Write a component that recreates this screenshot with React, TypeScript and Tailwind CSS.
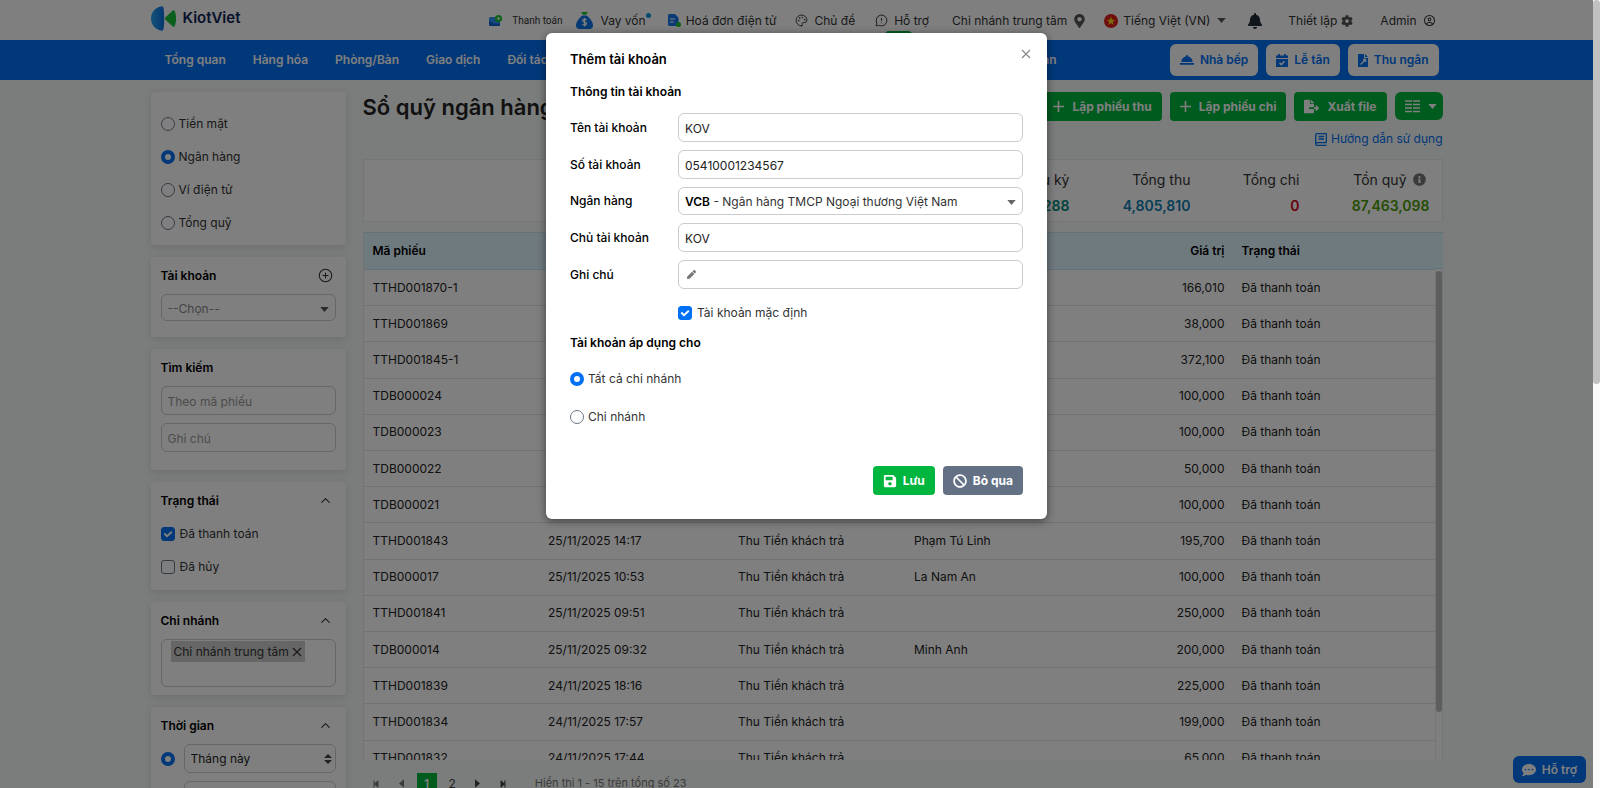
import { useState } from "react";
import type { ReactNode } from "react";
import {
  FaBan,
  FaBell,
  FaCog,
  FaCommentDots,
  FaFileExport,
  FaInfoCircle,
  FaMapMarkerAlt,
  FaPen,
  FaSave,
  FaStepBackward,
  FaStepForward,
} from "react-icons/fa";
import { FaRegCircleUser } from "react-icons/fa6";
import { ChevronUp, CirclePlus, MessageCircleWarning, Palette } from "lucide-react";

const payments = [
  { code: "TTHD001870-1", amount: "166,010" },
  { code: "TTHD001869", amount: "38,000" },
  { code: "TTHD001845-1", amount: "372,100" },
  { code: "TDB000024", amount: "100,000" },
  { code: "TDB000023", amount: "100,000" },
  { code: "TDB000022", amount: "50,000" },
  { code: "TDB000021", amount: "100,000" },
  { code: "TTHD001843", time: "25/11/2025 14:17", type: "Thu Tiền khách trả", payer: "Phạm Tú Linh", amount: "195,700" },
  { code: "TDB000017", time: "25/11/2025 10:53", type: "Thu Tiền khách trả", payer: "La Nam An", amount: "100,000" },
  { code: "TTHD001841", time: "25/11/2025 09:51", type: "Thu Tiền khách trả", amount: "250,000" },
  { code: "TDB000014", time: "25/11/2025 09:32", type: "Thu Tiền khách trả", payer: "Minh Anh", amount: "200,000" },
  { code: "TTHD001839", time: "24/11/2025 18:16", type: "Thu Tiền khách trả", amount: "225,000" },
  { code: "TTHD001834", time: "24/11/2025 17:57", type: "Thu Tiền khách trả", amount: "199,000" },
  { code: "TTHD001832", time: "24/11/2025 17:44", type: "Thu Tiền khách trả", amount: "65,000" },
];

const inputClass =
  "w-full h-[29px] rounded-md border border-[#ccc] bg-white px-1.5 pt-px text-xs text-[#222] placeholder:text-[#999] outline-none";

function Caret({ className = "" }: { className?: string }) {
  return (
    <svg viewBox="0 0 9 5" fill="currentColor" className={`h-[5px] w-[9px] ${className}`}>
      <path d="M0.300 0h8.400L4.500 5z" />
    </svg>
  );
}

function Cross({ className = "" }: { className?: string }) {
  return (
    <svg viewBox="0 0 10 10" fill="none" stroke="currentColor" strokeWidth="1.200" className={`size-[10px] ${className}`}>
      <path d="M1 1l8 8M9 1l-8 8" />
    </svg>
  );
}

function PlusSign() {
  return (
    <svg viewBox="0 0 11 11" stroke="currentColor" strokeWidth="1.600" className="size-[11px]">
      <path d="M5.500 0v11M0 5.500h11" />
    </svg>
  );
}

function Radio({ name, label, checked, onChange }: { name: string; label: ReactNode; checked: boolean; onChange: () => void }) {
  return (
    <label className="flex items-center gap-1">
      <input
        type="radio"
        name={name}
        checked={checked}
        onChange={onChange}
        className="size-[14px] shrink-0 appearance-none rounded-full border border-[#6b7688] bg-white checked:border-[4px] checked:border-[#0070f4]"
      />
      {label}
    </label>
  );
}

function Checkbox({ label, defaultChecked }: { label: string; defaultChecked?: boolean }) {
  return (
    <label className="flex items-center gap-[5px]">
      <span className="grid shrink-0">
        <input
          type="checkbox"
          defaultChecked={defaultChecked}
          className="peer [grid-area:1/1] size-[14px] appearance-none rounded-[3px] border border-[#6b7688] bg-white checked:border-[#0070f4] checked:bg-[#0070f4]"
        />
        <svg viewBox="0 0 14 14" className="pointer-events-none invisible [grid-area:1/1] size-[14px] peer-checked:visible">
          <path d="M3.200 6.500l2.800 2.700 4.800-4.500" fill="none" stroke="#fff" strokeWidth="1.900" />
        </svg>
      </span>
      {label}
    </label>
  );
}

function Card({ title, action, className = "", children }: { title: string; action?: ReactNode; className?: string; children: ReactNode }) {
  return (
    <section className={`rounded bg-white px-[10px] shadow-[0_2px_8px_rgba(0,0,0,0.12)] ${className}`}>
      <div className="flex h-[37px] items-center justify-between pr-[3px]">
        <h2 className="text-xs font-semibold text-black">{title}</h2>
        {action}
      </div>
      {children}
    </section>
  );
}

function Collapse() {
  return (
    <button aria-label="Thu gọn">
      <ChevronUp className="size-[15px]" strokeWidth={1.75} />
    </button>
  );
}

function Logo() {
  return (
    <a href="#" className="flex items-center gap-[7px]">
      <svg viewBox="0 0 25 25" className="size-[25px]">
        <defs>
          <linearGradient id="logo-blue" x1="0" x2="1">
            <stop offset="0" stopColor="#28a4f0" />
            <stop offset="1" stopColor="#0b6fe0" />
          </linearGradient>
        </defs>
        <path d="M10.500 0.200C3.500 1.500 0 7 0 12.500s3.500 11 10.500 12.300c1.200 0 1.800-.8 2-1.800 1-6.500 1-14.500 0-21-.2-1-.8-1.800-2-1.800z" fill="url(#logo-blue)" />
        <path d="M14.500 11.300l7-6.600c.9-.8 1.700-.6 2.200.4 1.900 4.600 1.900 10.200 0 14.800-.5 1-1.300 1.200-2.200.4l-7-6.600c-.7-.7-.7-1.700 0-2.400z" fill="#17c03c" />
      </svg>
      <span className="text-[15px] leading-6 font-semibold text-[#0d2257]">KiotViet</span>
    </a>
  );
}

function TopBar() {
  return (
    <header className="bg-white">
      <div className="mx-auto flex h-10 w-full max-w-[1292px] items-center justify-between pb-1 pr-2 whitespace-nowrap">
        <Logo />
        <div className="flex items-center pt-[5px]">
          <a href="#" className="flex items-center gap-[10px] font-['Roboto','Liberation_Sans',sans-serif] text-[10px]">
            <svg viewBox="0 0 13 11" className="h-[11px] w-[13px]">
              <rect y="2" width="11" height="9" rx="1.500" fill="#2a95f5" />
              <path d="M0 6l5 2.500h6v1a1.500 1.500 0 0 1-1.500 1.500h-8A1.500 1.500 0 0 1 0 9.500z" fill="#0b62d6" />
              <circle cx="9.500" cy="3.500" r="3.500" fill="#1cc531" />
              <circle cx="9.500" cy="3.500" r="1.200" fill="#fff" />
            </svg>
            Thanh toán
          </a>
          <a href="#" className="relative ml-[13px] flex items-center gap-2">
            <svg viewBox="0 0 17 17" className="size-[17px]">
              <path d="M5 0h7l-2 2.700H7z" fill="#1cc531" />
              <path d="M6.500 3.500h4C14 6 17 10 17 13.500c0 2-1.200 3.500-3.500 3.500h-10C1.200 17 0 15.500 0 13.500 0 10 3 6 6.500 3.500z" fill="#0b75e8" />
              <path d="M10.400 8.200C10 7.400 9.300 7.100 8.500 7.100c-1.100 0-1.900.5-1.900 1.500 0 2 3.900 1 3.900 3 0 1-.9 1.600-2 1.600-1 0-1.800-.4-2.100-1.300M8.500 5.900v8.500" fill="none" stroke="#fff" strokeWidth="1.200" />
            </svg>
            Vay vốn
            <span className="absolute top-0.5 -right-[5px] size-[5px] rounded-full bg-[#0a94e8]" />
          </a>
          <a href="#" className="ml-[22px] flex items-center gap-[5px]">
            <svg viewBox="0 0 13 13" className="size-[13px]">
              <path d="M1.500 0h5.500l3.500 3.500V12H1.500A1.500 1.500 0 0 1 0 10.500v-9A1.500 1.500 0 0 1 1.500 0z" fill="#1477ea" />
              <path d="M2 5h5M2 8h4" stroke="#fff" strokeWidth="1.200" />
              <circle cx="10.500" cy="10.500" r="2.500" fill="#1cc531" />
            </svg>
            Hoá đơn điện tử
          </a>
          <a href="#" className="ml-[19px] flex items-center gap-[6px]">
            <Palette className="size-[13px]" strokeWidth={1.75} />
            Chủ đề
          </a>
          <a href="#" className="relative ml-5 flex items-center gap-[6px]">
            <MessageCircleWarning className="size-[13px]" strokeWidth={1.75} />
            Hỗ trợ
            <span className="absolute top-5 left-[10px] rounded-sm bg-[#00b63e] px-1 text-[9px] leading-3 text-white">Beta</span>
          </a>
          <a href="#" className="ml-[23px] flex items-center gap-[7px]">
            Chi nhánh trung tâm
            <FaMapMarkerAlt className="h-[14px] w-[11px] text-[#555]" />
          </a>
          <button className="ml-[19px] flex items-center gap-[5px]">
            <svg viewBox="0 0 14 14" className="size-[14px]">
              <circle cx="7" cy="7" r="7" fill="#e01a1a" />
              <path d="M7 2.500l1.100 3.200h3.300L8.700 7.800l1 3.200L7 9.100 4.300 11l1-3.200L2.600 5.700h3.300z" fill="#ffdc1e" />
            </svg>
            Tiếng Việt (VN)
            <Caret className="ml-0.5 text-[#555]" />
          </button>
          <button aria-label="Thông báo" className="ml-[21px]">
            <FaBell className="size-4 text-[#222c38]" />
          </button>
          <a href="#" className="ml-[25px] flex items-center gap-1">
            Thiết lập
            <FaCog className="size-3 text-[#555]" />
          </a>
          <a href="#" className="ml-[27px] flex items-center gap-[7px]">
            Admin
            <FaRegCircleUser className="size-[11px]" />
          </a>
        </div>
      </div>
    </header>
  );
}

function NavBar() {
  return (
    <nav className="bg-[#0070f4] font-semibold text-white">
      <div className="mx-auto flex h-10 w-full max-w-[1292px] items-center justify-between pr-1 pl-[14px] whitespace-nowrap">
        <div className="flex w-[892px] items-center gap-[27px]">
          <a href="#">Tổng quan</a>
          <a href="#">Hàng hóa</a>
          <a href="#">Phòng/Bàn</a>
          <a href="#">Giao dịch</a>
          <a href="#">Đối tác</a>
          <a href="#" className="ml-auto">Thuế &amp; Kế toán</a>
        </div>
        <div className="flex gap-2 text-[#0070f4]">
          <button className="flex h-8 items-center gap-[6px] rounded-md bg-white px-[10px]">
            <svg viewBox="0 0 14 12" fill="currentColor" className="h-3 w-[14px]">
              <path d="M6.200 1h1.600v1.300C10.600 2.700 12.500 5 12.700 8H1.300C1.500 5 3.400 2.700 6.200 2.300zM0 9h14v1.800H0z" />
            </svg>
            Nhà bếp
          </button>
          <button className="flex h-8 items-center gap-[6px] rounded-md bg-white px-[10px]">
            <svg viewBox="0 0 12 13" className="h-[13px] w-3">
              <path d="M3 0v3M9 0v3" stroke="currentColor" strokeWidth="1.800" />
              <path d="M0 1.500h12V4H0zM0 5h12v8H0z" fill="currentColor" />
              <path d="M3.500 8.800l1.800 1.800 3.200-3.300" fill="none" stroke="#fff" strokeWidth="1.500" />
            </svg>
            Lễ tân
          </button>
          <button className="flex h-8 items-center gap-[6px] rounded-md bg-white px-[10px]">
            <svg viewBox="0 0 10 13" className="h-[13px] w-[10px]">
              <path d="M0 0h6v4h4v9H0zM7 0l3 3H7z" fill="currentColor" />
              <path d="M2.500 10.500l5-5M5 5.500h2.500V8" fill="none" stroke="#fff" strokeWidth="1.300" />
            </svg>
            Thu ngân
          </button>
        </div>
      </div>
    </nav>
  );
}

function Sidebar() {
  const [fund, setFund] = useState("Ngân hàng");
  return (
    <aside className="flex w-[195px] shrink-0 flex-col gap-3">
      <section className="flex h-[153px] flex-col gap-[13px] rounded bg-white px-[10px] pt-[22px] shadow-[0_2px_8px_rgba(0,0,0,0.12)]">
        {["Tiền mặt", "Ngân hàng", "Ví điện tử", "Tổng quỹ"].map((name) => (
          <Radio key={name} name="fund" label={name} checked={fund === name} onChange={() => setFund(name)} />
        ))}
      </section>
      <Card
        title="Tài khoản"
        className="pb-4"
        action={
          <button aria-label="Thêm tài khoản">
            <CirclePlus className="size-[15px]" strokeWidth={1.75} />
          </button>
        }
      >
        <div className="grid items-center">
          <select aria-label="Tài khoản" className="h-[27px] w-full appearance-none rounded-md border border-[#ccc] bg-white px-1.5 pt-0.5 text-xs text-[#888] [grid-area:1/1]">
            <option>--Chọn--</option>
          </select>
          <Caret className="pointer-events-none mt-1 mr-[7px] justify-self-end text-[#555] [grid-area:1/1]" />
        </div>
      </Card>
      <Card title="Tìm kiếm" className="pb-[18px]">
        <div className="flex flex-col gap-2">
          <input aria-label="Theo mã phiếu" placeholder="Theo mã phiếu" className={inputClass} />
          <input aria-label="Ghi chú" placeholder="Ghi chú" className={inputClass} />
        </div>
      </Card>
      <Card title="Trạng thái" className="pb-[13px]" action={<Collapse />}>
        <div className="flex flex-col gap-[13px] pt-[5px]">
          <Checkbox label="Đã thanh toán" defaultChecked />
          <Checkbox label="Đã hủy" />
        </div>
      </Card>
      <Card title="Chi nhánh" className="pb-2" action={<Collapse />}>
        <div className="h-12 rounded-md border border-[#ccc] px-[9px] pt-px">
          <span className="inline-flex h-[21px] items-center gap-[3px] bg-[#ccc] px-[3px]">
            Chi nhánh trung tâm
            <button aria-label="Bỏ chọn">
              <Cross />
            </button>
          </span>
        </div>
      </Card>
      <Card title="Thời gian" className="h-40" action={<Collapse />}>
        <div className="flex items-center gap-[9px]">
          <Radio name="time" label={<span className="sr-only">Tháng này</span>} checked onChange={() => {}} />
          <div className="grid flex-1 items-center">
            <select aria-label="Thời gian" className="h-[29px] w-full appearance-none rounded-md border border-[#ccc] bg-white px-1.5 text-xs text-[#222] [grid-area:1/1]">
              <option>Tháng này</option>
            </select>
            <svg viewBox="0 0 8 10" className="pointer-events-none mr-1 h-[10px] w-2 justify-self-end fill-[#444] [grid-area:1/1]">
              <path d="M0 4l4-4 4 4zM0 6l4 4 4-4z" />
            </svg>
          </div>
        </div>
        <div className="mt-2 pl-[23px]">
          <input aria-label="Lựa chọn khác" className={inputClass} />
        </div>
      </Card>
    </aside>
  );
}

function Summary() {
  return (
    <dl className="mt-3 flex h-[63px] items-center justify-end border border-[#e8ebee] bg-white pt-1 pr-3 text-right text-sm text-[#333]">
      <div className="w-[120px]">
        <dt>Quỹ đầu kỳ</dt>
        <dd className="mt-1.5 font-semibold text-[#00857c]">82,657,288</dd>
      </div>
      <div className="w-[121px]">
        <dt>Tổng thu</dt>
        <dd className="mt-1.5 font-semibold text-[#0e7cb0]">4,805,810</dd>
      </div>
      <div className="w-[109px]">
        <dt>Tổng chi</dt>
        <dd className="mt-1.5 font-semibold text-[#d0021b]">0</dd>
      </div>
      <div className="w-[130px]">
        <dt className="flex items-center justify-end gap-[6px] pr-1">
          Tồn quỹ
          <FaInfoCircle className="size-[13px] text-[#777]" />
        </dt>
        <dd className="mt-1.5 font-semibold text-[#4b9a06]">87,463,098</dd>
      </div>
    </dl>
  );
}

function PaymentTable() {
  return (
    <div className="mt-[10px] flex h-[528px] overflow-hidden bg-white">
      <div className="flex-1">
        <table className="h-[545px] w-full table-fixed text-left text-xs text-[#222]">
          <thead className="bg-[#def4ff] text-black">
            <tr className="h-[37px] border-y border-[#c5e4f2]">
              <th className="w-[176px] border-l border-[#e8ebee] px-[9px] font-semibold">Mã phiếu</th>
              <th className="w-[190px]" />
              <th className="w-[176px]" />
              <th />
              <th className="w-[110px] px-[10px] text-right font-semibold">Giá trị</th>
              <th className="w-[200px] px-[7px] font-semibold">Trạng thái</th>
            </tr>
          </thead>
          <tbody>
            {payments.map((p) => (
              <tr key={p.code} className="h-9 border-b border-[#e3e3e3]">
                <td className="border-l border-[#e8ebee] px-[9px]">{p.code}</td>
                <td className="px-[9px]">{p.time}</td>
                <td className="px-[9px]">{p.type}</td>
                <td className="px-[9px]">{p.payer}</td>
                <td className="px-[10px] text-right">{p.amount}</td>
                <td className="px-[7px]">Đã thanh toán</td>
              </tr>
            ))}
          </tbody>
        </table>
      </div>
      <div className="flex w-2 flex-col">
        <div className="h-[37px] border-y border-[#c5e4f2] bg-[#def4ff]" />
        <div className="flex-1 border-x border-[#e8ebee] pt-0.5">
          <div className="h-[441px] rounded-full bg-[#bdbdbd]" />
        </div>
      </div>
    </div>
  );
}

function Pager() {
  return (
    <div className="mt-[13px] flex h-[21px] items-center text-xs text-[#444]">
      <button aria-label="Trang đầu" className="ml-[9px] text-[#777]"><FaStepBackward className="size-2" /></button>
      <button aria-label="Trang trước" className="ml-[17px] rotate-90 text-[#777]"><Caret /></button>
      <button className="ml-[11px] h-[21px] w-5 bg-[#00b63e] font-semibold text-white">1</button>
      <button className="ml-3">2</button>
      <button aria-label="Trang sau" className="ml-[17px] -rotate-90"><Caret /></button>
      <button aria-label="Trang cuối" className="ml-[17px]"><FaStepForward className="size-2" /></button>
      <span className="ml-7 text-[11px] text-[#777]">Hiển thị 1 - 15 trên tổng số 23</span>
    </div>
  );
}

const greenButton = "flex h-[29px] items-center gap-2 rounded bg-[#00b63e] px-[10px] font-bold text-white";

function CashBook() {
  return (
    <main className="flex-1">
      <div className="flex items-center justify-between">
        <h1 className="text-[22px] leading-7 font-semibold text-[#222]">Sổ quỹ ngân hàng</h1>
        <div className="flex gap-2">
          <button className={greenButton}><PlusSign />Lập phiếu thu</button>
          <button className={greenButton}><PlusSign />Lập phiếu chi</button>
          <button className={greenButton}><FaFileExport className="size-[15px]" />Xuất file</button>
          <button aria-label="Cột hiển thị" className="flex h-7 w-12 items-center justify-between rounded-md bg-[#00b63e] pr-[6px] pl-[10px] text-white">
            <svg viewBox="0 0 15 13" className="h-[13px] w-[15px]">
              <path d="M0 1h7M8 1h7M0 4.500h7M8 4.500h7M0 8h7M8 8h7M0 11.500h7M8 11.500h7" stroke="currentColor" strokeWidth="1.600" />
            </svg>
            <Caret />
          </button>
        </div>
      </div>
      <a href="#" className="mt-[10px] ml-auto flex w-fit items-center gap-1 leading-4 text-[#0070f4]">
        <svg viewBox="0 0 12 13" className="h-[13px] w-3" fill="none" stroke="currentColor" strokeWidth="1.300">
          <path d="M11.300 9.700V.7H2A1.300 1.300 0 0 0 .7 2v9M11.300 9.700H2a1.300 1.300 0 0 0 0 2.600h9.500M3.500 3.500h5.500M3.500 6h5.500" />
        </svg>
        Hướng dẫn sử dụng
      </a>
      <Summary />
      <PaymentTable />
      <Pager />
    </main>
  );
}

function FormRow({ id, label, children }: { id: string; label: string; children: ReactNode }) {
  return (
    <div className="flex items-center">
      <label htmlFor={id} className="w-[108px] shrink-0 font-medium text-black">{label}</label>
      {children}
    </div>
  );
}

function AccountDialog({ onClose }: { onClose: () => void }) {
  const [scope, setScope] = useState("all");
  return (
    <div role="dialog" aria-labelledby="dialog-title" className="w-[501px] rounded-md bg-white px-6 pt-4 pb-6 text-xs leading-5 text-[#333] shadow-[0_2px_8px_rgba(0,0,0,0.5)]">
      <div className="flex items-start justify-between">
        <h2 id="dialog-title" className="text-[13px] leading-5 font-semibold text-black">Thêm tài khoản</h2>
        <button aria-label="Đóng" onClick={onClose} className="-mr-2 flex">
          <Cross className="text-[#888]" />
        </button>
      </div>
      <h3 className="mt-[13px] text-xs leading-5 font-semibold text-black">Thông tin tài khoản</h3>
      <div className="mt-[11px] flex flex-col gap-2">
        <FormRow id="acc-name" label="Tên tài khoản">
          <input id="acc-name" defaultValue="KOV" className={inputClass} />
        </FormRow>
        <FormRow id="acc-number" label="Số tài khoản">
          <input id="acc-number" defaultValue="05410001234567" className={inputClass} />
        </FormRow>
        <FormRow id="acc-bank" label="Ngân hàng">
          <div className="grid h-7 flex-1 items-center rounded-md border border-[#ccc] px-1.5 pt-0.5">
            <span aria-hidden="true" className="[grid-area:1/1]"><b className="font-semibold text-black">VCB</b> - Ngân hàng TMCP Ngoại thương Việt Nam</span>
            <Caret className="justify-self-end text-[#666] [grid-area:1/1]" />
            <select id="acc-bank" className="opacity-0 [grid-area:1/1]">
              <option>VCB</option>
            </select>
          </div>
        </FormRow>
        <FormRow id="acc-owner" label="Chủ tài khoản">
          <input id="acc-owner" defaultValue="KOV" className={inputClass} />
        </FormRow>
        <FormRow id="acc-note" label="Ghi chú">
          <div className="flex h-[29px] flex-1 items-center rounded-md border border-[#ccc] px-2">
            <FaPen className="size-[9px] text-[#777]" />
            <input id="acc-note" className="ml-1 min-w-0 flex-1 outline-none" />
          </div>
        </FormRow>
      </div>
      <div className="mt-[14px] ml-[108px]">
        <Checkbox label="Tài khoản mặc định" defaultChecked />
      </div>
      <h3 className="mt-[10px] text-xs leading-5 font-semibold text-black">Tài khoản áp dụng cho</h3>
      <div className="mt-4 flex flex-col gap-[18px]">
        <Radio name="scope" label="Tất cả chi nhánh" checked={scope === "all"} onChange={() => setScope("all")} />
        <Radio name="scope" label="Chi nhánh" checked={scope === "one"} onChange={() => setScope("one")} />
      </div>
      <div className="mt-[39px] flex justify-end gap-2 font-bold text-white">
        <button className="flex h-[29px] items-center gap-[6px] rounded bg-[#00b63e] px-[10px]"><FaSave className="size-[14px]" />Lưu</button>
        <button onClick={onClose} className="flex h-[29px] items-center gap-[6px] rounded bg-[#647184] px-[10px]"><FaBan className="size-[14px]" />Bỏ qua</button>
      </div>
    </div>
  );
}

export default function App() {
  const [open, setOpen] = useState(true);
  return (
    <div className="flex h-screen overflow-hidden font-['Inter','Liberation_Sans',sans-serif] text-xs leading-5 text-[#333]">
      <div className="relative min-w-0 flex-1 overflow-hidden bg-[#f6faf8]">
        <TopBar />
        <NavBar />
        <div className="mx-auto flex w-full max-w-[1292px] gap-[17px] pt-3">
          <Sidebar />
          <CashBook />
        </div>
        <button className="absolute right-[7px] bottom-[5px] flex h-[27px] items-center gap-[6px] rounded-md bg-[#0070f4] px-[9px] font-semibold text-white">
          <FaCommentDots className="size-[14px]" />
          Hỗ trợ
        </button>
        {open && (
          <div className="absolute inset-0 flex items-start justify-center bg-black/50 pt-[33px]">
            <AccountDialog onClose={() => setOpen(false)} />
          </div>
        )}
      </div>
      <div className="w-[7px] bg-[#fafafa]">
        <div className="h-[384px] rounded-full bg-[#c1c1c1]" />
      </div>
    </div>
  );
}
